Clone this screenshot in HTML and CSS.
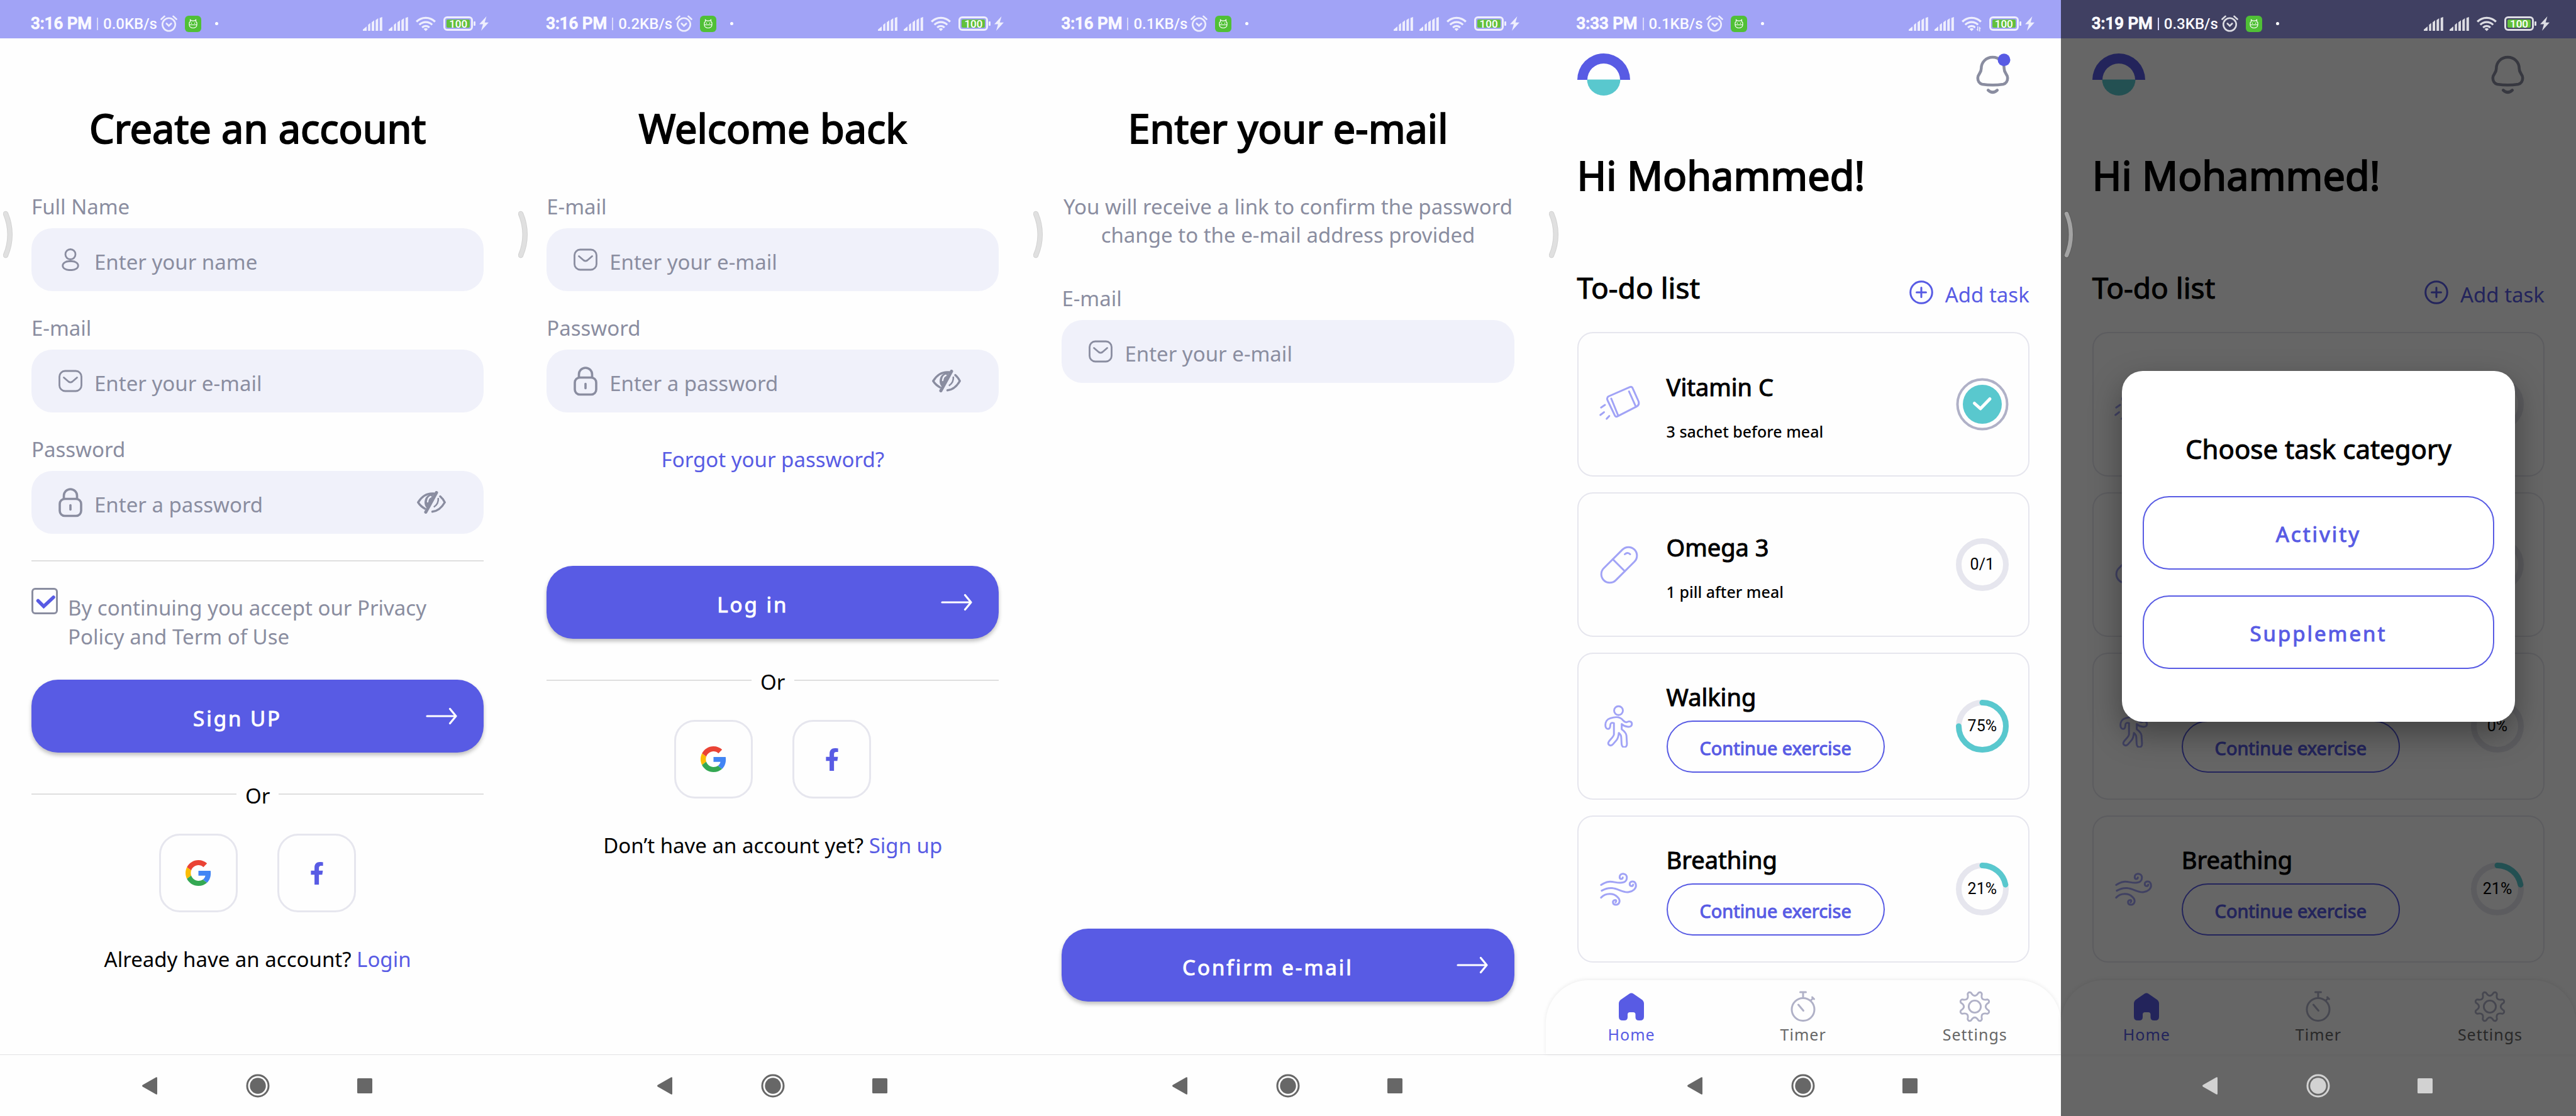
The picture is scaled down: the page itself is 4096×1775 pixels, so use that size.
FILE: index.html
```
<!DOCTYPE html>
<html lang="en">
<head>
<meta charset="utf-8">
<meta name="viewport" content="width=device-width, initial-scale=1">
<title>Health tracker screens</title>
<link rel="stylesheet" href="styles.css">
</head>
<body>
<svg class="sprite" aria-hidden="true">
  <symbol id="alarm" viewBox="0 0 27 27"><g fill="none" stroke="currentColor" stroke-width="2.6" stroke-linecap="round"><circle cx="13.5" cy="15" r="10.2"/><path d="M9.8 13.5l3.7 3.6 3.7-3.6M1.5 6.5l5-4.6M25.500 6.500l-5-4.600"/></g></symbol>
  <symbol id="robot" viewBox="0 0 26 26"><rect width="26" height="26" rx="6" fill="#50c036"/><g fill="none" stroke="#fff" stroke-width="1.200"><path d="M7 14.500V11l1.500-1.500V6.500l2.500 1.700h4l2.500-1.700v3L19 11v3.500zM7 14.500c0 3 2.500 5 6 5s6-2 6-5z"/><path d="M10.500 11v1.800M15.500 11v1.800"/></g></symbol>
  <symbol id="signal" viewBox="0 0 31 22"><path fill="currentColor" d="M0 22v-2l6-5v7zM8.300 22v-9.500l3.500-3V22zM14 22V8.500l4-3.300V22zM20.300 22V5l4-3V22zM26.800 22V1.500L30.800 0v22z"/></symbol>
  <symbol id="wifi" viewBox="0 0 32 24"><g fill="none" stroke="currentColor" stroke-width="3.300"><path d="M1.200 8.500a21 21 0 0 1 29.600 0M5.800 13.300a14.500 14.500 0 0 1 20.400 0M10.200 17.800a8.200 8.200 0 0 1 11.600 0"/></g><path fill="currentColor" d="M16 23.500l-3.300-3.300a4.600 4.600 0 0 1 6.600 0z"/></symbol>
  <symbol id="bolt" viewBox="0 0 15 23"><path fill="currentColor" d="M11.500 0L0 12.500h6L3 23 15 9.800H8.700z"/></symbol>
  <symbol id="edge" viewBox="0 0 16 76"><path class="rim" d="M4 5c9 21 9 45 0 66" fill="none" stroke-width="8.500" stroke-linecap="round"/><path d="M4 5c9 21 9 45 0 66" fill="none" stroke="currentColor" stroke-width="6.500" stroke-linecap="round"/></symbol>
  <symbol id="person" viewBox="0 0 38 48"><g fill="none" stroke="currentColor" stroke-width="2.800"><ellipse cx="19" cy="15.500" rx="8" ry="8"/><rect x="6.700" y="26.500" width="24.600" height="14" rx="10" ry="7"/></g></symbol>
  <symbol id="mail" viewBox="0 0 38 48"><g fill="none" stroke="currentColor" stroke-width="2.800" stroke-linecap="round"><rect x="1.500" y="8" width="35" height="32" rx="9"/><path d="M8.500 18.500l7.500 6.500q3 2.200 6 0l7.500-6.500"/></g></symbol>
  <symbol id="lock" viewBox="0 0 38 48"><g fill="none" stroke="currentColor" stroke-width="3.600"><rect x="2" y="18.500" width="34" height="27" rx="8"/><path d="M8.500 18.500V13.500a10.500 10.500 0 0 1 21 0v5"/><path d="M19 28.500v7" stroke-linecap="round"/></g></symbol>
  <symbol id="eye" viewBox="0 0 46 36"><g fill="none" stroke="currentColor" stroke-width="3.400" stroke-linecap="round"><path d="M12.500 28C8 25.500 4 21.500 1.800 18 8 8 17 3 27 4M37 8.500c3 2.500 5.500 6 7.200 9.500C39 27 32.500 32 24.500 32.800"/></g><path fill="currentColor" d="M27 4C17 4 12 11 12 18c0 4 1.300 7 4 9.500z"/><path d="M17 17q.5-6.500 5-8" fill="none" stroke="#f0f1fa" stroke-width="2.400" stroke-linecap="round"/><path d="M33.800 11c.7 6-2.500 11.500-7 14.500" fill="none" stroke="currentColor" stroke-width="2.600"/><path d="M31 2.500L14 33.500" stroke="currentColor" stroke-width="5" stroke-linecap="round"/></symbol>
  <symbol id="arrow" viewBox="0 0 50 28"><path d="M2 14h45M38.500 2.500L48 14l-9.500 11.500" fill="none" stroke="currentColor" stroke-width="3.200" stroke-linecap="round" stroke-linejoin="round"/></symbol>
  <symbol id="google" viewBox="0 0 48 48"><path fill="#ea4335" d="M24 9.500c3.540 0 6.710 1.220 9.210 3.600l6.850-6.850C35.900 2.380 30.470 0 24 0 14.620 0 6.510 5.380 2.560 13.220l7.980 6.190C12.430 13.720 17.740 9.500 24 9.500z"/><path fill="#4285f4" d="M46.980 24.550c0-1.570-.15-3.090-.38-4.550H24v9.020h12.940c-.58 2.960-2.260 5.480-4.780 7.180l7.730 6c4.510-4.180 7.090-10.360 7.090-17.650z"/><path fill="#fbbc05" d="M10.530 28.590c-.48-1.450-.76-2.990-.76-4.590s.27-3.140.76-4.590l-7.980-6.190C.92 16.460 0 20.120 0 24c0 3.880.92 7.540 2.560 10.780l7.970-6.190z"/><path fill="#34a853" d="M24 48c6.480 0 11.930-2.130 15.890-5.810l-7.730-6c-2.150 1.450-4.920 2.300-8.160 2.300-6.260 0-11.570-4.220-13.470-9.910l-7.980 6.190C6.510 42.620 14.620 48 24 48z"/></symbol>
  <symbol id="facebook" viewBox="22 0 276 512"><path fill="#585be4" d="M279.140 288l14.220-92.660h-88.910v-60.130c0-25.350 12.420-50.060 52.240-50.060h40.420V6.260S260.430 0 225.360 0c-73.220 0-121.080 44.380-121.080 124.720v70.620H22.890V288h81.390v224h100.170V288z"/></symbol>
  <symbol id="logo" viewBox="0 0 84 67"><path fill="#585be4" d="M0 42a42 42 0 0 1 84 0H68a26 26 0 0 0-52 0z"/><path fill="#59c8ce" d="M15.500 41.500h53a26.500 25.500 0 0 1-53 0z"/></symbol>
  <symbol id="bell" viewBox="0 0 60 68"><g fill="none" stroke="#8a8da0" stroke-width="4.600" stroke-linecap="round" stroke-linejoin="round"><path d="M29.500 6C19 6 11.300 14 11.300 24c0 8-5.500 8.500-5.500 15 0 5 2.500 9 7 10q16.700 2.600 33.400 0c4.500-1 7-5 7-10 0-6.500-5.500-7-5.500-15C47.700 14 40 6 29.500 6z"/><path d="M22.300 58.500q7.200 6.500 14.400 0"/></g></symbol>
  <symbol id="plus" viewBox="0 0 38 38"><g fill="none" stroke="currentColor" stroke-width="3" stroke-linecap="round"><circle cx="19" cy="19" r="17.300"/><path d="M11.500 19h15M19 11.500v15"/></g></symbol>
  <symbol id="sachet" viewBox="0 0 68 68"><g fill="none" stroke="#a1a3f6" stroke-width="3" stroke-linecap="round" stroke-linejoin="round"><path d="M16.500 21.500L50 6.800q4-1.600 5.200 2L64.200 29q2 6-2.500 8.300L31 53.200q-3 1.500-4.400-1.600L15 27.500q-1.600-4 1.500-6z"/><path d="M21 25l11 27M49.200 13.500l11 24.500M11 35.100l-6.200 4.100M9.500 46.600l-5.800 4.400M17.800 52.700l-4.100 4.400"/></g></symbol>
  <symbol id="pill" viewBox="0 0 68 68"><g fill="none" stroke="#a1a3f6" stroke-width="3" stroke-linecap="round"><rect x="20" y="0" width="27" height="69" rx="13.500" transform="rotate(45 33.500 34.500)"/><path d="M23.500 25.500l19 19M42.500 17.500q4.500-4 8.500 0"/></g></symbol>
  <symbol id="walk" viewBox="0 0 68 70"><g fill="none" stroke="#a1a3f6" stroke-width="3" stroke-linejoin="round"><circle cx="32.500" cy="9.500" r="7.200"/><path d="M11 33c0-5 3-9.500 8-11 9-3 17-2 21 3.500 2 2.500 4 4 7 2.500 4-2 7.500 0 7.400 3.500-.4 4.500-4.400 4.800-7.400 4.300-3-.4-6-1-9.300-4.300v8.500c4 3 7.500 6 7.800 10.500l.8 13c.3 7.500-8.300 8-8.800.5l-.5-10c0-4-1.500-6-4-8-.5 5-1 8.500-3.500 11.500l-6 7c-4 4.500-10 .5-7-4 2-3.500 8-8 8.500-12V30c-4-1.500-6 0-6 4 0 8-8 7-8-1z"/></g></symbol>
  <symbol id="wind" viewBox="0 0 68 68"><g fill="none" stroke="#a1a3f6" stroke-width="3" stroke-linecap="round" stroke-linejoin="round"><path d="M4.800 27.500c14-9.500 20-3 31-3.500 7 0 10-3.500 10-8 0-8-11.500-8.500-11.500-1 0 4 5 4 5 .5"/><path d="M5.800 36.600c20-11 30 4 42 2.400 8-1 13-6 12.500-11-.8-8.500-10-7-10-2 0 4 5 4.500 5.500 1"/><path d="M4.800 47.600c8-8 20-7 26-1 6.500 6 2.500 12.500-2.500 12.500-5.500 0-6.500-7.500-1-7.500 2 0 2 2.500.5 3.500"/></g></symbol>
  <symbol id="home" viewBox="0 0 50 50"><path fill="currentColor" d="M21.500 4.700q3.500-2.300 7 0l13 9q3.500 2.500 3.500 6.500V41q0 6-6 6h-2q-5.500 0-5.500-5v-4.500Q31.500 34 28 34h-5.500q-3.500 0-3.500 3.500V42q0 5-5.500 5H11q-6 0-6-6V20.200q0-4 3.500-6.500z"/></symbol>
  <symbol id="timer" viewBox="0 0 50 50"><g fill="none" stroke="#b0b1c7" stroke-width="3" stroke-linecap="round"><circle cx="25" cy="29.500" r="18"/><path d="M20.500 2h9M25 2v9M37 15.500l4-4M39.500 10l3 3M17.500 22l8 9.500"/></g></symbol>
  <symbol id="gear" viewBox="-26 -26 52 52"><g fill="none" stroke="#b0b1c7" stroke-width="3" stroke-linejoin="round"><circle r="10"/><path d="M23.100-6.400Q12.900 0 23.100 6.400 24.900 10.300 20.900 11.800 9.100 9.100 11.800 20.900 10.300 24.900 6.400 23.100 0 12.900-6.400 23.100-10.300 24.900-11.800 20.900-9.100 9.100-20.900 11.800-24.900 10.300-23.100 6.400-12.900 0-23.100-6.400-24.900-10.300-20.900-11.800-9.100-9.100-11.800-20.900-10.300-24.900-6.400-23.100 0-12.900 6.400-23.100 10.300-24.900 11.800-20.900 9.100-9.100 20.900-11.800 24.900-10.300 23.100-6.400z"/></g></symbol>
  <symbol id="back" viewBox="0 0 48 48"><path fill="currentColor" d="M11 22.500L32 10.500q2-1 2 1v25q0 2-2 1L11 25.500q-2-1.500 0-3z"/></symbol>
  <symbol id="circle" viewBox="0 0 48 48"><circle cx="24" cy="24" r="17" fill="none" stroke="currentColor" stroke-width="3"/><circle cx="24" cy="24" r="12.700" fill="currentColor"/></symbol>
  <symbol id="square" viewBox="0 0 48 48"><rect x="12" y="12" width="24" height="24" rx="1.500" fill="currentColor"/></symbol>
</svg>

<main class="screens">
  <section class="phone">
    <header class="status">
      <div class="status-side"><span class="clock">3:16 PM</span><span class="rate">0.0KB/s</span><svg class="i-alarm"><use href="#alarm"/></svg><svg class="i-robot"><use href="#robot"/></svg><span class="dot"></span></div>
      <div class="status-side status-right"><svg class="i-signal"><use href="#signal"/></svg><svg class="i-signal"><use href="#signal"/></svg><svg class="i-wifi"><use href="#wifi"/></svg><span class="battery"><span>100</span></span><svg class="i-bolt"><use href="#bolt"/></svg></div>
    </header>
    <svg class="edge"><use href="#edge"/></svg>
    <form class="body">
      <h1>Create an account</h1>
      <label class="label" for="name">Full Name</label>
      <div class="field"><svg><use href="#person"/></svg><input id="name" type="text" placeholder="Enter your name"></div>
      <label class="label" for="mail1">E-mail</label>
      <div class="field"><svg><use href="#mail"/></svg><input id="mail1" type="email" placeholder="Enter your e-mail"></div>
      <label class="label" for="pass1">Password</label>
      <div class="field"><svg><use href="#lock"/></svg><input id="pass1" type="password" placeholder="Enter a password"><button type="button" class="reveal" aria-label="Show password"><svg><use href="#eye"/></svg></button></div>
      <hr>
      <div class="terms"><input id="terms" type="checkbox" checked><label for="terms">By continuing you accept our Privacy Policy and Term of Use</label></div>
      <button type="button" class="primary"><span>Sign UP</span><svg><use href="#arrow"/></svg></button>
      <div class="or">Or</div>
      <div class="social"><button type="button" aria-label="Google"><svg class="i-google"><use href="#google"/></svg></button><button type="button" aria-label="Facebook"><svg class="i-facebook"><use href="#facebook"/></svg></button></div>
      <p class="switch">Already have an account? <a href="#login">Login</a></p>
    </form>
    <nav class="system"><button type="button" aria-label="Back"><svg><use href="#back"/></svg></button><button type="button" aria-label="Home screen"><svg><use href="#circle"/></svg></button><button type="button" aria-label="Recent apps"><svg><use href="#square"/></svg></button></nav>
  </section>

  <section class="phone" id="login">
    <header class="status">
      <div class="status-side"><span class="clock">3:16 PM</span><span class="rate">0.2KB/s</span><svg class="i-alarm"><use href="#alarm"/></svg><svg class="i-robot"><use href="#robot"/></svg><span class="dot"></span></div>
      <div class="status-side status-right"><svg class="i-signal"><use href="#signal"/></svg><svg class="i-signal"><use href="#signal"/></svg><svg class="i-wifi"><use href="#wifi"/></svg><span class="battery"><span>100</span></span><svg class="i-bolt"><use href="#bolt"/></svg></div>
    </header>
    <svg class="edge"><use href="#edge"/></svg>
    <form class="body">
      <h1>Welcome back</h1>
      <label class="label" for="mail2">E-mail</label>
      <div class="field"><svg><use href="#mail"/></svg><input id="mail2" type="email" placeholder="Enter your e-mail"></div>
      <label class="label" for="pass2">Password</label>
      <div class="field"><svg><use href="#lock"/></svg><input id="pass2" type="password" placeholder="Enter a password"><button type="button" class="reveal" aria-label="Show password"><svg><use href="#eye"/></svg></button></div>
      <p class="forgot"><a href="#reset">Forgot your password?</a></p>
      <button type="button" class="primary"><span>Log in</span><svg><use href="#arrow"/></svg></button>
      <div class="or">Or</div>
      <div class="social"><button type="button" aria-label="Google"><svg class="i-google"><use href="#google"/></svg></button><button type="button" aria-label="Facebook"><svg class="i-facebook"><use href="#facebook"/></svg></button></div>
      <p class="switch">Don’t have an account yet? <a href="#signup">Sign up</a></p>
    </form>
    <nav class="system"><button type="button" aria-label="Back"><svg><use href="#back"/></svg></button><button type="button" aria-label="Home screen"><svg><use href="#circle"/></svg></button><button type="button" aria-label="Recent apps"><svg><use href="#square"/></svg></button></nav>
  </section>

  <section class="phone" id="reset">
    <header class="status">
      <div class="status-side"><span class="clock">3:16 PM</span><span class="rate">0.1KB/s</span><svg class="i-alarm"><use href="#alarm"/></svg><svg class="i-robot"><use href="#robot"/></svg><span class="dot"></span></div>
      <div class="status-side status-right"><svg class="i-signal"><use href="#signal"/></svg><svg class="i-signal"><use href="#signal"/></svg><svg class="i-wifi"><use href="#wifi"/></svg><span class="battery"><span>100</span></span><svg class="i-bolt"><use href="#bolt"/></svg></div>
    </header>
    <svg class="edge"><use href="#edge"/></svg>
    <form class="body">
      <h1>Enter your e-mail</h1>
      <p class="intro">You will receive a link to confirm the password change to the e-mail address provided</p>
      <label class="label" for="mail3">E-mail</label>
      <div class="field"><svg><use href="#mail"/></svg><input id="mail3" type="email" placeholder="Enter your e-mail"></div>
      <button type="button" class="primary bottom"><span>Confirm e-mail</span><svg><use href="#arrow"/></svg></button>
    </form>
    <nav class="system"><button type="button" aria-label="Back"><svg><use href="#back"/></svg></button><button type="button" aria-label="Home screen"><svg><use href="#circle"/></svg></button><button type="button" aria-label="Recent apps"><svg><use href="#square"/></svg></button></nav>
  </section>

  <section class="phone">
    <header class="status">
      <div class="status-side"><span class="clock">3:33 PM</span><span class="rate">0.1KB/s</span><svg class="i-alarm"><use href="#alarm"/></svg><svg class="i-robot"><use href="#robot"/></svg><span class="dot"></span></div>
      <div class="status-side status-right"><svg class="i-signal"><use href="#signal"/></svg><svg class="i-signal"><use href="#signal"/></svg><svg class="i-wifi" viewBox="0 0 32 24"><use href="#wifi" width="32" height="24"/><path fill="#a1a3f6" d="M22 16h10v8H22z"/><path fill="currentColor" d="M26.500 16v8L23.500 20.500h1.500V16zM28 24v-8l3 3.500h-1.500V24z"/></svg><span class="battery"><span>100</span></span><svg class="i-bolt"><use href="#bolt"/></svg></div>
    </header>
    <svg class="edge"><use href="#edge"/></svg>
    <div class="app">
      <div class="home">
        <div class="topbar"><svg class="i-logo"><use href="#logo"/></svg><button type="button" class="bell" aria-label="Notifications"><svg viewBox="0 0 60 68"><use href="#bell" width="60" height="68"/><circle cx="47.500" cy="10.300" r="10" fill="#585be4"/></svg></button></div>
        <h1>Hi Mohammed!</h1>
        <div class="listhead"><h2>To-do list</h2><button type="button" class="add"><svg><use href="#plus"/></svg>Add task</button></div>
        <ul class="cards">
          <li class="card"><svg class="i-task"><use href="#sachet"/></svg><div class="info note"><h3>Vitamin C</h3><p>3 sachet before meal</p></div><div class="ring"><svg viewBox="0 0 84 84"><circle cx="42" cy="42" r="39.500" fill="none" stroke="#b0b1c7" stroke-width="4"/><circle cx="42" cy="42" r="31" fill="#59c8ce"/><path d="M29.500 40.500l9.500 8.500 15-15.500" fill="none" stroke="#fff" stroke-width="5" stroke-linecap="round" stroke-linejoin="round"/></svg></div></li>
          <li class="card"><svg class="i-task"><use href="#pill"/></svg><div class="info note"><h3>Omega 3</h3><p>1 pill after meal</p></div><div class="ring"><svg viewBox="0 0 84 84"><circle class="track" cx="42" cy="42" r="37.500"/></svg><span>0/1</span></div></li>
          <li class="card tall"><svg class="i-task"><use href="#walk"/></svg><div class="info"><h3>Walking</h3><button type="button" class="outline small">Continue exercise</button></div><div class="ring"><svg viewBox="0 0 84 84"><circle class="track" cx="42" cy="42" r="37.500"/><circle class="done" cx="42" cy="42" r="37.500" pathLength="100" stroke-dasharray="75 100"/></svg><span>75%</span></div></li>
          <li class="card tall"><svg class="i-task"><use href="#wind"/></svg><div class="info"><h3>Breathing</h3><button type="button" class="outline small">Continue exercise</button></div><div class="ring"><svg viewBox="0 0 84 84"><circle class="track" cx="42" cy="42" r="37.500"/><circle class="done" cx="42" cy="42" r="37.500" pathLength="100" stroke-dasharray="22 100"/></svg><span>21%</span></div></li>
        </ul>
      </div>
      <nav class="tabs"><a href="#home" class="active"><svg><use href="#home"/></svg>Home</a><a href="#timer"><svg><use href="#timer"/></svg>Timer</a><a href="#settings"><svg><use href="#gear"/></svg>Settings</a></nav>
    </div>
    <nav class="system"><button type="button" aria-label="Back"><svg><use href="#back"/></svg></button><button type="button" aria-label="Home screen"><svg><use href="#circle"/></svg></button><button type="button" aria-label="Recent apps"><svg><use href="#square"/></svg></button></nav>
  </section>

  <section class="phone dimmed">
    <header class="status">
      <div class="status-side"><span class="clock">3:19 PM</span><span class="rate">0.3KB/s</span><svg class="i-alarm"><use href="#alarm"/></svg><svg class="i-robot"><use href="#robot"/></svg><span class="dot"></span></div>
      <div class="status-side status-right"><svg class="i-signal"><use href="#signal"/></svg><svg class="i-signal"><use href="#signal"/></svg><svg class="i-wifi"><use href="#wifi"/></svg><span class="battery"><span>100</span></span><svg class="i-bolt"><use href="#bolt"/></svg></div>
    </header>
    <svg class="edge"><use href="#edge"/></svg>
    <div class="app">
      <div class="home">
        <div class="topbar"><svg class="i-logo"><use href="#logo"/></svg><button type="button" class="bell" aria-label="Notifications"><svg><use href="#bell"/></svg></button></div>
        <h1>Hi Mohammed!</h1>
        <div class="listhead"><h2>To-do list</h2><button type="button" class="add"><svg><use href="#plus"/></svg>Add task</button></div>
        <ul class="cards">
          <li class="card"><svg class="i-task"><use href="#sachet"/></svg><div class="info note"></div><div class="ring"><svg viewBox="0 0 84 84"><circle class="track" cx="42" cy="42" r="37.500"/></svg></div></li>
          <li class="card"><svg class="i-task"><use href="#pill"/></svg><div class="info note"></div><div class="ring"><svg viewBox="0 0 84 84"><circle class="track" cx="42" cy="42" r="37.500"/></svg></div></li>
          <li class="card tall"><svg class="i-task"><use href="#walk"/></svg><div class="info"><h3>Walking</h3><button type="button" class="outline small">Continue exercise</button></div><div class="ring"><svg viewBox="0 0 84 84"><circle class="track" cx="42" cy="42" r="37.500"/></svg><span>0%</span></div></li>
          <li class="card tall"><svg class="i-task"><use href="#wind"/></svg><div class="info"><h3>Breathing</h3><button type="button" class="outline small">Continue exercise</button></div><div class="ring"><svg viewBox="0 0 84 84"><circle class="track" cx="42" cy="42" r="37.500"/><circle class="done" cx="42" cy="42" r="37.500" pathLength="100" stroke-dasharray="22 100"/></svg><span>21%</span></div></li>
        </ul>
      </div>
      <nav class="tabs"><a href="#home" class="active"><svg><use href="#home"/></svg>Home</a><a href="#timer"><svg><use href="#timer"/></svg>Timer</a><a href="#settings"><svg><use href="#gear"/></svg>Settings</a></nav>
      <div class="scrim">
        <div class="dialog" role="dialog" aria-labelledby="pick">
          <h2 id="pick">Choose task category</h2>
          <button type="button" class="outline">Activity</button>
          <button type="button" class="outline">Supplement</button>
        </div>
      </div>
    </div>
    <nav class="system"><button type="button" aria-label="Back"><svg><use href="#back"/></svg></button><button type="button" aria-label="Home screen"><svg><use href="#circle"/></svg></button><button type="button" aria-label="Recent apps"><svg><use href="#square"/></svg></button></nav>
  </section>
</main>
</body>
</html>
```
FILE: styles.css
```
:root {
  --brand: #585be4;
  --muted: #8a8da0;
  --line: #e6e6ee;
  --teal: #59c8ce;
}
* { box-sizing: border-box; margin: 0; padding: 0; }
body {
  background: #fefefe;
  color: #000;
  font: 33px/45px "Noto Sans", "Open Sans", sans-serif;
}
button, input { font: inherit; color: inherit; background: none; border: 0; }
svg { display: block; flex: none; }
a { color: var(--brand); text-decoration: none; }
ul { list-style: none; }
.sprite { position: absolute; width: 0; height: 0; }

.screens { display: grid; grid-template-columns: repeat(5, minmax(0, 1fr)); min-height: 100vh; }
.phone { position: relative; display: flex; flex-direction: column; background: #fefefe; }

/* Status bar */
.status {
  display: flex;
  justify-content: space-between;
  height: 61px;
  padding: 14px 42px 0 49px;
  background: #a1a3f6;
  color: #eeeefd;
  font-family: Roboto, sans-serif;
  font-weight: 500;
}
.status-side { display: flex; align-items: center; }
.clock { font-size: 26px; color: #fafaff; -webkit-text-stroke: 1px; }
.rate { margin-left: 8px; padding-left: 8px; border-left: 2px solid #d8d9fb; font-size: 24px; line-height: 20px; color: #fafaff; }
.i-alarm { width: 27px; height: 27px; margin-left: 5px; }
.i-robot { width: 26px; height: 26px; margin-left: 12px; }
.dot { width: 5px; height: 5px; margin-left: 22px; border-radius: 50%; background: #fff; }
.status-right { gap: 10px; }
.i-signal { width: 31px; height: 22px; }
.i-wifi { width: 32px; height: 24px; margin-left: 2px; }
.battery {
  position: relative;
  display: flex;
  width: 47px;
  height: 23px;
  margin-left: 2px;
  padding: 2px;
  border: 3px solid;
  border-radius: 6px;
}
.battery span {
  flex: 1;
  border-radius: 2px;
  background: #62c03c;
  color: #fff;
  font-size: 17px;
  line-height: 14px;
  text-align: center;
}
.battery::after {
  content: "";
  position: absolute;
  top: 5px;
  right: -7px;
  width: 3px;
  height: 7px;
  border-radius: 1px;
  background: currentColor;
}
.i-bolt { width: 15px; height: 23px; }
.edge { --rim: #d2d2d2; position: absolute; top: 335px; left: 5px; z-index: 2; width: 16px; height: 76px; color: #e0e0e0; }
.rim { stroke: var(--rim); }

/* Forms */
.body { flex: 1; display: flex; flex-direction: column; padding: 100px 50px 84px; }
h1 { font-size: 63px; line-height: 86px; font-weight: 400; -webkit-text-stroke: 2px; }
.body h1 { margin-bottom: 59px; text-align: center; }
.label { color: var(--muted); }
.field {
  display: flex;
  align-items: center;
  height: 100px;
  margin-top: 12px;
  padding: 0 60px 0 43px;
  border-radius: 33px;
  background: #f0f1fa;
  color: var(--muted);
}
.field > svg { width: 38px; height: 48px; }
.field input { flex: 1; min-width: 0; height: 51px; padding: 6px 0 0 19px; outline: 0; }
.field input::placeholder { color: var(--muted); opacity: 1; }
.field + .label { margin-top: 36px; }
.reveal svg { width: 46px; height: 36px; }
hr { height: 2px; margin: 42px 0; border: 0; background: #dfdfdf; }
.terms { display: flex; gap: 16px; margin-bottom: 45px; color: var(--muted); line-height: 46px; }
.terms input {
  appearance: none;
  flex: none;
  width: 42px;
  height: 42px;
  border: 3px solid var(--muted);
  border-radius: 6px;
  background: url("data:image/svg+xml,%3Csvg xmlns='http://www.w3.org/2000/svg' viewBox='0 0 36 36'%3E%3Cpath d='M7.500 17.500l9 9L32 12' fill='none' stroke='%23585be4' stroke-width='5.500' stroke-linecap='round'/%3E%3C/svg%3E") center / 100%;
}
.terms label { margin-top: 9px; }
.primary {
  display: flex;
  align-items: center;
  gap: 14px;
  height: 116px;
  padding: 0 42px;
  border-radius: 42px;
  background: var(--brand);
  box-shadow: 0 4px 6px rgba(0, 0, 0, .25);
  color: #fff;
}
.primary span { flex: 1; padding-top: 6px; letter-spacing: 3px; -webkit-text-stroke: 1px; }
.primary svg { width: 50px; height: 28px; }
.primary.bottom { margin-top: auto; }
.or { display: flex; align-items: center; gap: 14px; margin: 46px 0 38px; }
.or::before, .or::after { content: ""; flex: 1; height: 2px; margin-bottom: 6px; background: #dfdfdf; }
.social { display: flex; justify-content: center; gap: 63px; }
.social button {
  display: grid;
  place-items: center;
  width: 125px;
  height: 125px;
  border: 3px solid var(--line);
  border-radius: 33px;
}
.i-google { width: 41px; height: 41px; }
.i-facebook { width: 20px; height: 36px; }
.switch { margin-top: 52px; text-align: center; }
.forgot { margin: 52px 0 147px; text-align: center; }
.intro { margin-bottom: 56px; color: var(--muted); text-align: center; }

/* Home */
.app { position: relative; flex: 1; display: flex; flex-direction: column; }
.home { flex: 1; padding: 24px 50px 0; }
.topbar { display: flex; justify-content: space-between; height: 67px; margin-bottom: 84px; }
.i-logo { width: 84px; height: 67px; }
.bell { margin-right: 28px; }
.bell svg { width: 60px; height: 68px; }
.listhead { display: flex; justify-content: space-between; align-items: flex-end; margin: 104px 0 39px; }
h2 { font-size: 46px; line-height: 63px; font-weight: 400; -webkit-text-stroke: 1px; }
.add { display: flex; gap: 19px; margin-bottom: -2px; color: var(--brand); }
.add svg { width: 38px; height: 38px; }
.cards { display: grid; gap: 25px; }
.card {
  display: flex;
  align-items: center;
  height: 230px;
  padding: 0 31px;
  border: 2px solid var(--line);
  border-radius: 25px;
}
.card.tall { height: 234px; }
.i-task { width: 68px; height: 68px; }
.info { flex: 1; display: flex; flex-direction: column; align-items: flex-start; gap: 12px; margin-left: 41px; }
.info.note { gap: 28px; padding-top: 6px; }
h3 { font-size: 38px; line-height: 52px; font-weight: 400; -webkit-text-stroke: 1px; }
.info p { font-size: 25px; line-height: 34px; font-weight: 500; }
.outline {
  height: 117px;
  padding-top: 4px;
  border: 2px solid var(--brand);
  border-radius: 42px;
  color: var(--brand);
  letter-spacing: 3px;
  -webkit-text-stroke: 1px;
}
.outline.small { width: 347px; height: 83px; font-size: 29px; letter-spacing: 0; }
.ring { display: grid; place-items: center; font: 25px/34px Roboto, sans-serif; }
.ring > * { grid-area: 1 / 1; }
.ring svg { width: 84px; height: 84px; }
.track, .done { fill: none; stroke: var(--line); stroke-width: 9; }
.done { stroke: var(--teal); stroke-linecap: round; transform: rotate(-90deg); transform-origin: center; }
.tabs {
  display: grid;
  grid-template-columns: repeat(3, 1fr);
  height: 118px;
  padding-top: 17px;
  border-radius: 68px 68px 0 0;
  background: #fefefe;
  box-shadow: 0 -1px 6px rgba(0, 0, 0, .08);
}
.tabs a {
  display: flex;
  flex-direction: column;
  align-items: center;
  gap: 2px;
  color: #676767;
  font-size: 25px;
  line-height: 34px;
  letter-spacing: 1px;
}
.tabs .active { color: var(--brand); }
.tabs svg { width: 50px; height: 50px; }

/* System navigation */
.system {
  display: flex;
  justify-content: center;
  align-items: center;
  gap: 122px;
  height: 98px;
  border-top: 1px solid #e2e2e4;
  color: #676767;
}
.system svg { width: 48px; height: 48px; }

/* Dialog state */
.scrim { position: absolute; inset: 0; display: grid; align-items: center; padding: 0 97px; background: rgba(0, 0, 0, .6); }
.dialog {
  display: flex;
  flex-direction: column;
  gap: 41px;
  padding: 95px 33px 84px;
  border-radius: 33px;
  background: #fff;
  box-shadow: 0 20px 50px rgba(0, 0, 0, .35);
}
.dialog h2 { margin-bottom: 6px; font-size: 42px; line-height: 57px; text-align: center; }
.dimmed { background: #666; }
.dimmed .status { background: #404062; color: #dddde3; }
.dimmed .app { background: #fefefe; }
.dimmed .edge { --rim: #5c5c5c; color: #a3a3a3; }
.dimmed .system { border-color: #666; color: #d2d2d2; }
```
